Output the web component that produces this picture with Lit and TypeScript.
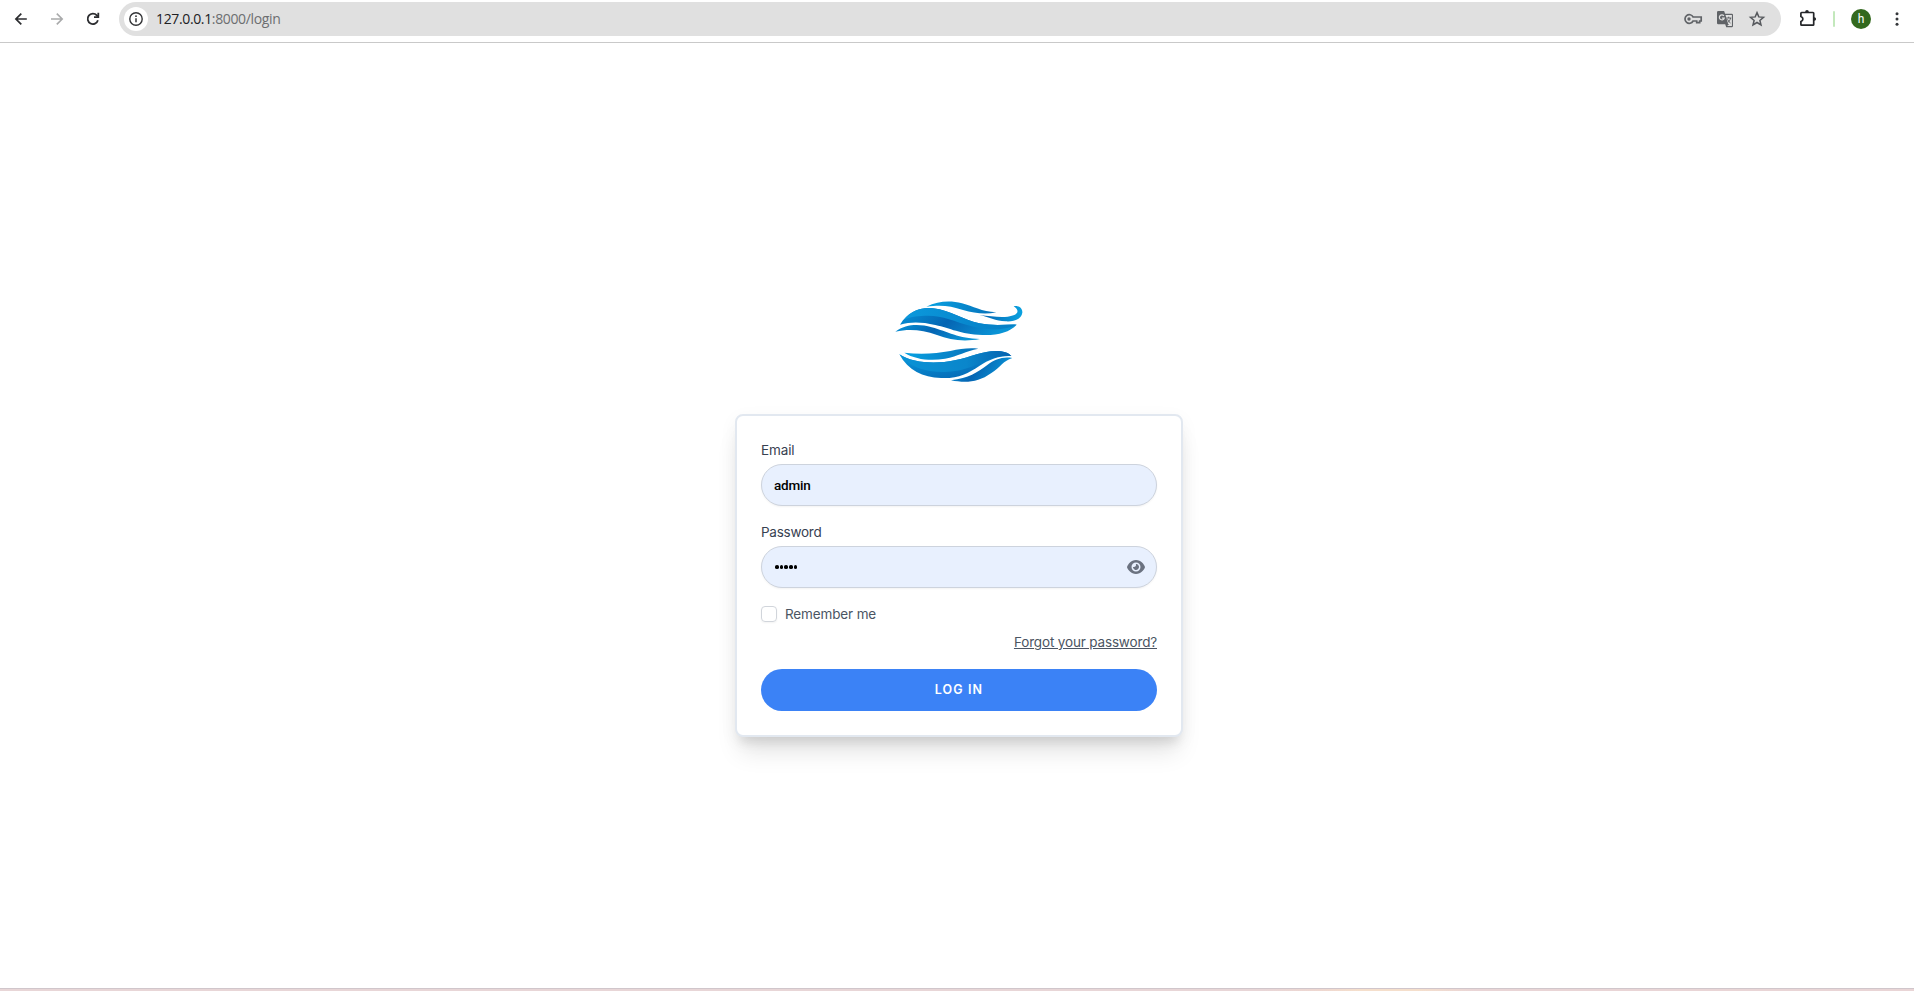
import { LitElement, html, css, svg } from "lit";
import { customElement } from "lit/decorators.js";

@customElement("browser-bar")
class BrowserBar extends LitElement {
  static styles = css`
    :host { display: block; flex: none; }
    * { box-sizing: border-box; }
    .bar { height: 43px; padding-bottom: 4px; display: flex; align-items: center; border-bottom: 1px solid #c9c9c9; background: #fff; }
    svg { display: block; flex: none; }
    .nav { display: flex; gap: 16px; padding-left: 11px; width: 119px; flex: none; }
    .omni { width: 1662px; height: 34px; border-radius: 17px; background: #e0e0e0; display: flex; align-items: center; padding: 0 14px 0 5px; flex: none; }
    .info { width: 24px; height: 24px; border-radius: 50%; background: #fff; display: grid; place-items: center; }
    .url { flex: 1; margin-left: 8px; font: 14px/20px "Open Sans", sans-serif; letter-spacing: -0.36px; color: #202124; white-space: nowrap; }
    .url span { color: #6c6e70; }
    .tools { display: flex; gap: 12px; }
    .ext { margin-left: 16px; }
    .sep { width: 2px; height: 16px; border-radius: 1px; background: #c3e8bc; margin-left: 16px; }
    .avatar { width: 20px; height: 20px; border-radius: 50%; background: #33691e; color: #fff; font: 12px/20px Roboto, sans-serif; text-align: center; margin-left: 16px; }
    .dots { margin-left: 16px; }
  `;
  render() {
    return html`<div class="bar">
      <div class="nav">
        <svg width="20" height="20" viewBox="0 0 20 20" fill="none" stroke="#2c2d30" stroke-width="1.7"><path d="M15.8 10H5M10.3 4.6 4.9 10l5.4 5.4"/></svg>
        <svg width="20" height="20" viewBox="0 0 20 20" fill="none" stroke="#a9aaab" stroke-width="1.6"><path d="M4 10h11M9.8 4.6l5.4 5.4-5.4 5.4"/></svg>
        <svg width="20" height="20" viewBox="0 0 20 20" fill="none" stroke="#2c2d30" stroke-width="1.8"><path d="M14.9 11.2a5.2 5.2 0 1 1-1.1-4.8l1 1.1"/><path d="M15.3 3.8v4.3H11"/></svg>
      </div>
      <div class="omni">
        <div class="info"><svg width="16" height="16" viewBox="0 0 16 16"><circle cx="8" cy="8" r="6.2" fill="none" stroke="#333437" stroke-width="1.4"/><path d="M8 7.2v4" stroke="#333437" stroke-width="1.5"/><circle cx="8" cy="5.2" r=".9" fill="#333437"/></svg></div>
        <div class="url">127.0.0.1<span>:8000/login</span></div>
        <div class="tools">
          <svg width="20" height="20" viewBox="0 0 20 20" fill="none" stroke="#606367" stroke-width="1.7"><path d="M10.1 8H18.200v4h-1.500v1.700h-3V12h-3.600A4.300 4.300 0 1 1 10.100 8z"/><circle cx="6" cy="10" r="1.7" fill="#606367" stroke="none"/></svg>
          <svg width="20" height="20" viewBox="0 0 20 20"><path d="M3.2 2h5.9l1 2.8h6.7a1.2 1.2 0 0 1 1.2 1.2v11a1.2 1.2 0 0 1-1.2 1.2h-5.6l-1-3H3.200A1.200 1.200 0 0 1 2 14V3.200A1.200 1.200 0 0 1 3.200 2z" fill="#606367"/><path d="M10.500 5.900h6.400v11.200h-4.800l2-2.200h-1z" fill="#e0e0e0"/><path d="M8.900 6.900a2.500 2.500 0 1 0 .4 2.200H6.900" fill="none" stroke="#e0e0e0" stroke-width="1.200"/><path d="M11.300 9h5M13.700 7.700V9M15.600 9c-.4 2-1.600 3.600-3 4.700M12.500 10.300c.7 1.600 1.700 2.700 3 3.700" fill="none" stroke="#606367"/></svg>
          <svg width="20" height="20" viewBox="0 0 20 20" fill="none" stroke="#56595d" stroke-width="1.500" stroke-linejoin="miter"><path d="m10 3.600 1.800 4.300 4.700.4-3.600 3.100 1.100 4.600-4-2.500L6 16l1.100-4.600-3.600-3.100 4.700-.4z"/></svg>
        </div>
      </div>
      <svg class="ext" width="20" height="20" viewBox="0 0 20 20"><path d="M4.600 3.500h11.400a.7.7 0 0 1 .7.700v11.300a.7.700 0 0 1-.7.700H4.600a.7.700 0 0 1-.7-.7v-3q2-.7 2-2.500t-2-2.500V4.200a.7.700 0 0 1 .7-.7z" fill="none" stroke="#242629" stroke-width="1.700"/><path d="M8.200 3.300v-.5a1.800 1.800 0 0 1 3.600 0v.5zM16.800 8.200h.5a1.800 1.800 0 0 1 0 3.600h-.5z" fill="#242629"/></svg>
      <div class="sep"></div>
      <div class="avatar">h</div>
      <svg class="dots" width="20" height="20" viewBox="0 0 20 20" fill="#35373a"><circle cx="10" cy="4.700" r="1.500"/><circle cx="10" cy="10" r="1.500"/><circle cx="10" cy="15.200" r="1.500"/></svg>
    </div>`;
  }
}

const waves = svg`
  <defs>
    <linearGradient id="deep" x1="0" y1="0" x2="1" y2=".25"><stop offset="0" stop-color="#0794d8"/><stop offset=".5" stop-color="#0565b3"/><stop offset="1" stop-color="#0a94d6"/></linearGradient>
    <linearGradient id="top" x1="0" y1="0" x2="1" y2="0"><stop offset="0" stop-color="#08a2e2"/><stop offset="1" stop-color="#0670b9"/></linearGradient>
    <linearGradient id="sheen" x1="0" y1="0" x2="1" y2="0"><stop offset="0" stop-color="#0c99dc"/><stop offset=".6" stop-color="#0787cd"/><stop offset="1" stop-color="#087fc5"/></linearGradient>
    <linearGradient id="curl" x1="0" y1="0" x2="1" y2="0"><stop offset="0" stop-color="#0662b0"/><stop offset="1" stop-color="#0aa2e0"/></linearGradient>
    <linearGradient id="bowl" x1="0" y1="0" x2=".7" y2="1"><stop offset="0" stop-color="#0a9fe0"/><stop offset="1" stop-color="#0567b4"/></linearGradient>
    <linearGradient id="bowlTop" x1="0" y1="0" x2="1" y2="0"><stop offset="0" stop-color="#0a93d6"/><stop offset=".6" stop-color="#0a86cb"/><stop offset="1" stop-color="#0561ae"/></linearGradient>
  </defs>
  <path fill="url(#top)" d="M139 50C176 32 212 31 246 40C280 49 304 65 349 67C317 74 283 70 249 60C211 47 183 44 139 50Z"/>
  <path fill="url(#deep)" d="M60 104C84 66 119 51 158 55C212 61 249 90 298 100C340 108 374 103 410 104C389 127 350 137 307 135C238 132 213 115 166 105C124 96 94 95 60 104Z"/>
  <path fill="url(#sheen)" d="M72 89C94 61 127 51 160 55C212 61 249 90 298 100C340 108 374 103 410 104C370 123 318 121 275 109C222 94 190 77 144 77C116 77 94 79 72 89Z"/>
  <path fill="url(#curl)" d="M298 75C330 79 358 82 383 80C413 77 422 63 401 49C417 45 428 55 427 68C425 85 405 96 377 94C347 93 326 81 298 75Z"/>
  <path fill="url(#deep)" d="M46 125C79 101 119 102 155 112C204 125 235 146 300 147C250 156 211 150 171 135C127 120 90 116 46 125Z"/>
  <path fill="url(#top)" d="M73 188C126 194 170 190 211 183C242 177 263 173 295 176C257 183 235 198 195 206C151 214 105 208 73 188Z"/>
  <path fill="url(#bowl)" d="M58 193C100 220 168 223 224 211C278 199 315 180 355 183C378 185 388 191 394 198C359 196 326 209 299 227C263 251 235 266 183 264C128 263 85 242 58 193Z"/>
  <path fill="url(#bowlTop)" d="M58 193C100 220 168 223 224 211C278 199 315 180 355 183C378 185 388 191 394 198C354 193 320 211 285 226C235 248 193 248 150 243C113 237 85 225 58 193Z"/>
  <path fill="url(#deep)" d="M213 271C267 264 291 248 322 225C345 208 368 199 397 204C370 212 362 231 333 250C296 277 257 280 213 271Z"/>`;

@customElement("login-form")
class LoginForm extends LitElement {
  static styles = css`
    :host { display: flex; flex-direction: column; align-items: center; width: 448px; font-family: Inter, sans-serif; font-size: 13.5px; line-height: 20px; }
    * { box-sizing: border-box; }
    .logo { display: block; margin-left: 2px; margin-bottom: 19px; }
    .card { width: 448px; height: 323px; padding: 24px; border: 2px solid #e2e8f0; border-radius: 8px; background: #fff; box-shadow: 0 20px 25px -5px rgba(0,0,0,.1), 0 10px 10px -5px rgba(0,0,0,.08), 0 5px 18px rgba(0,0,0,.05); }
    .label { display: block; height: 20px; margin-bottom: 4px; color: #374151; }
    .email { letter-spacing: -0.12px; }
    .pass { letter-spacing: -0.25px; }
    .field { height: 42px; border: 1px solid #cdd3dd; border-radius: 21px; background: #e8f0fe; padding: 0 11px 0 12px; display: flex; align-items: center; justify-content: space-between; box-shadow: 0 1px 2px rgba(0,0,0,.05); color: #000; margin-bottom: 16px; }
    .value { font: 500 13.5px/20px Roboto, sans-serif; letter-spacing: -0.2px; }
    .bullets { display: flex; gap: 1px; padding-left: 1px; }
    .bullet { width: 3.700px; height: 3.700px; border-radius: 50%; background: #000; }
    .remember { display: flex; align-items: center; gap: 8px; color: #4b5563; height: 20px; letter-spacing: -0.14px; }
    .box { width: 16px; height: 16px; border: 1px solid #d1d5db; border-radius: 4px; box-shadow: 0 1px 2px rgba(0,0,0,.05); }
    .forgot { display: flex; justify-content: flex-end; height: 20px; margin-top: 8px; color: #4b5563; }
    .link { color: inherit; text-decoration: underline; letter-spacing: -0.16px; }
    .button { width: 396px; height: 42px; margin-top: 17px; border: 0; border-radius: 21px; background: #3b82f6; color: #fff; font: 600 12.5px/16px Inter, sans-serif; letter-spacing: 1.1px; text-transform: uppercase; display: block; padding: 0; }
  `;
  render() {
    return html`
      <svg class="logo" width="160" height="105" viewBox="0 0 480 315">${waves}</svg>
      <div class="card">
        <label class="label"><span class="email">Email</span></label>
        <div class="field"><span class="value">admin</span></div>
        <label class="label"><span class="pass">Password</span></label>
        <div class="field">
          <div class="bullets">${[0, 1, 2, 3, 4].map(() => html`<i class="bullet"></i>`)}</div>
          <svg width="18" height="16" viewBox="0 0 576 512" fill="#6b7280"><path d="M288 32c-81 0-146 37-193 80C48 156 17 208 3 244a32 32 0 0 0 0 24c14 36 45 88 92 132 47 43 112 80 193 80s146-37 193-80c47-44 78-96 92-132a32 32 0 0 0 0-24c-14-36-45-88-92-132-47-43-112-80-193-80zM144 256a144 144 0 1 1 288 0 144 144 0 1 1-288 0zm144-64a64 64 0 0 1-84 61c-6-2-12 2-12 7 0 7 1 14 3 21a96 96 0 1 0 118-118c-7-2-14-3-21-3-5 0-9 6-7 12 2 6 3 13 3 20z"/></svg>
        </div>
        <div class="remember"><span class="box"></span><span>Remember me</span></div>
        <div class="forgot"><a class="link">Forgot your password?</a></div>
        <button class="button">Log in</button>
      </div>`;
  }
}

@customElement("app-root")
class AppRoot extends LitElement {
  static styles = css`
    :host { display: flex; flex-direction: column; width: 100%; height: 991px; background: #fff; overflow: hidden; }
    .page { flex: 1; display: flex; justify-content: center; align-items: flex-start; padding: 247px 0 0 4px; }
    .edge { flex: none; box-sizing: border-box; height: 3px; border-top: 1px solid #d0c6cb; background: linear-gradient(90deg, #e8d6d7 0 66%, #eed7d0 69%, #f5dfcc 71% 74%, #e9d5d6 77% 100%); }
  `;
  render() {
    return html`<browser-bar></browser-bar>
      <div class="page"><login-form></login-form></div>
      <div class="edge"></div>`;
  }
}
